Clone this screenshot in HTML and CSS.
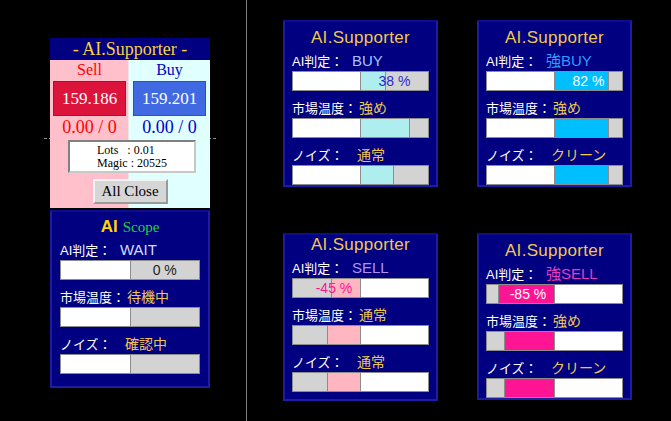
FILE: index.html
```html
<!DOCTYPE html>
<html lang="ja">
<head>
  <meta charset="UTF-8" />
  <meta name="viewport" content="width=device-width, initial-scale=1" />
  <title>AI.Supporter</title>
  <link rel="stylesheet" href="styles.css">
</head>
<body>
  <div class="screen">

    <div class="chart-left">
      <div class="crosshair"></div>

      <section class="trade-panel" aria-label="発注パネル">
        <h1 class="trade-title">- AI.Supporter -</h1>
        <div class="trade-body">
          <div class="sides">
            <div class="side sell">
              <span class="side-name">Sell</span>
              <span class="price">159.186</span>
              <span class="pl">0.00 / 0</span>
            </div>
            <div class="side buy">
              <span class="side-name">Buy</span>
              <span class="price">159.201</span>
              <span class="pl">0.00 / 0</span>
            </div>
          </div>
          <div class="lots">Lots&nbsp;&nbsp;&nbsp;: 0.01<br>Magic : 20525</div>
          <button class="close-all" type="button">All Close</button>
        </div>
      </section>

      <section class="card scope" aria-label="AI Scope">
        <h2 class="card-title"><b class="scope-ai">AI</b> <span class="scope-name">Scope</span></h2>
        <p class="label first"><span class="key k-judge">AI判定：</span><span class="val wait">WAIT</span></p>
        <div class="bar">
          <div class="half"></div>
          <div class="half track"><span class="pct dark">0 %</span></div>
        </div>
        <p class="label"><span class="key k-temp">市場温度：</span><span class="val">待機中</span></p>
        <div class="bar">
          <div class="half"></div>
          <div class="half track"></div>
        </div>
        <p class="label"><span class="key k-noise">ノイズ：</span><span class="val">確認中</span></p>
        <div class="bar">
          <div class="half"></div>
          <div class="half track"></div>
        </div>
      </section>
    </div>

    <div class="chart-right">

      <section class="card">
        <h2 class="card-title">AI.Supporter</h2>
        <p class="label first"><span class="key k-judge">AI判定：</span><span class="val buy">BUY</span></p>
        <div class="bar">
          <div class="half"></div>
          <div class="half track up"><span class="fill cyan" style="width:37%"></span><span class="pct blue">38 %</span></div>
        </div>
        <p class="label"><span class="key k-temp">市場温度：</span><span class="val">強め</span></p>
        <div class="bar">
          <div class="half"></div>
          <div class="half track up"><span class="fill cyan" style="width:73%"></span></div>
        </div>
        <p class="label"><span class="key k-noise">ノイズ：</span><span class="val">通常</span></p>
        <div class="bar">
          <div class="half"></div>
          <div class="half track up"><span class="fill cyan" style="width:49%"></span></div>
        </div>
      </section>

      <section class="card">
        <h2 class="card-title">AI.Supporter</h2>
        <p class="label first"><span class="key k-judge">AI判定：</span><span class="val strong-buy">強BUY</span></p>
        <div class="bar">
          <div class="half"></div>
          <div class="half track up"><span class="fill sky" style="width:80%"></span><span class="pct light">82 %</span></div>
        </div>
        <p class="label"><span class="key k-temp">市場温度：</span><span class="val">強め</span></p>
        <div class="bar">
          <div class="half"></div>
          <div class="half track up"><span class="fill sky" style="width:80%"></span></div>
        </div>
        <p class="label"><span class="key k-noise">ノイズ：</span><span class="val">クリーン</span></p>
        <div class="bar">
          <div class="half"></div>
          <div class="half track up"><span class="fill sky" style="width:80%"></span></div>
        </div>
      </section>

      <section class="card tight">
        <h2 class="card-title">AI.Supporter</h2>
        <p class="label first"><span class="key k-judge">AI判定：</span><span class="val sell">SELL</span></p>
        <div class="bar">
          <div class="half track down"><span class="fill pink" style="width:44%"></span><span class="pct rose">-45 %</span></div>
          <div class="half"></div>
        </div>
        <p class="label"><span class="key k-temp">市場温度：</span><span class="val">通常</span></p>
        <div class="bar">
          <div class="half track down"><span class="fill pink" style="width:50%"></span></div>
          <div class="half"></div>
        </div>
        <p class="label"><span class="key k-noise">ノイズ：</span><span class="val">通常</span></p>
        <div class="bar">
          <div class="half track down"><span class="fill pink" style="width:50%"></span></div>
          <div class="half"></div>
        </div>
      </section>

      <section class="card">
        <h2 class="card-title">AI.Supporter</h2>
        <p class="label first"><span class="key k-judge">AI判定：</span><span class="val strong-sell">強SELL</span></p>
        <div class="bar">
          <div class="half track down"><span class="fill hot" style="width:83%"></span><span class="pct light">-85 %</span></div>
          <div class="half"></div>
        </div>
        <p class="label"><span class="key k-temp">市場温度：</span><span class="val">強め</span></p>
        <div class="bar">
          <div class="half track down"><span class="fill hot" style="width:74%"></span></div>
          <div class="half"></div>
        </div>
        <p class="label"><span class="key k-noise">ノイズ：</span><span class="val">クリーン</span></p>
        <div class="bar">
          <div class="half track down"><span class="fill hot" style="width:74%"></span></div>
          <div class="half"></div>
        </div>
      </section>

    </div>
  </div>
</body>
</html>
```

FILE: styles.css
```css
:root {
  --navy: #000080;
  --edge: #1c1ca4;
  --gold: #f0c850;
  --track: #d3d3d3;
  --bar-line: #8c8c8c;
  --font-sans: "Liberation Sans", "Noto Sans CJK JP", sans-serif;
  --font-serif: "Liberation Serif", "Noto Sans CJK JP", serif;
}

*, *::before, *::after {
  box-sizing: border-box;
}
body {
  margin: 0;
  background: #000;
  font-family: var(--font-sans);
  color: #fff;
  overflow: hidden;
}
h1, h2, p {
  margin: 0;
  font-weight: normal;
}

.screen {
  display: flex;
  min-height: 100vh;
}

/* left chart window, split from the right one by a grey line */
.chart-left {
  position: relative;
  width: 247px;
  border-right: 1px solid #808080;
  padding: 38px 0 0 50px;
}
.crosshair {
  position: absolute;
  top: 138px;
  left: 44px;
  width: 172px;
  border-top: 1px dashed #8a8a8a;
}

.trade-panel {
  position: relative;
  width: 160px;
}
.trade-title {
  height: 22px;
  line-height: 22px;
  background: var(--navy);
  color: #f7d23e;
  font-family: var(--font-serif);
  font-size: 18px;
  text-align: center;
}
.trade-body {
  height: 148px;
  background: linear-gradient(to right, #ffc0cb 78px, #e8e8e8 78px, #e8e8e8 79px, #e0ffff 79px);
  font-family: var(--font-serif);
}
.sides {
  display: grid;
  grid-template-columns: 79px 81px;
}
.side {
  display: flex;
  flex-direction: column;
  align-items: center;
}
.side-name {
  height: 20px;
  line-height: 20px;
  font-size: 16px;
}
.price {
  width: 73px;
  height: 35px;
  margin-top: 1px;
  line-height: 33px;
  text-align: center;
  font-size: 17px;
  color: #fff;
}
.pl {
  margin-top: 2px;
  height: 18px;
  line-height: 18px;
  font-size: 18px;
}
.sell .side-name,
.sell .pl {
  color: #ff0000;
}
.sell .price {
  background: #dc143c;
  border: 1px solid #b0102e;
}
.buy .side-name,
.buy .pl {
  color: #0000cd;
}
.buy .price {
  background: #4169e1;
  border: 1px solid #2f50b8;
}

.lots {
  width: 128px;
  height: 33px;
  margin: 4px 0 0 18px;
  padding: 2px 0 0 27px;
  background: #fff;
  border: 2px solid;
  border-color: #808080 #c8c8c8 #c8c8c8 #808080;
  color: #000;
  font-size: 12px;
  line-height: 13px;
}
.close-all {
  display: block;
  width: 75px;
  height: 25px;
  margin: 6px auto 0;
  padding: 0;
  background: #d6d6d6;
  border: 2px solid;
  border-color: #f4f4f4 #9a9a9a #9a9a9a #f4f4f4;
  font-family: var(--font-serif);
  font-size: 15px;
  color: #000;
}

/* indicator cards */
.chart-right {
  display: grid;
  grid-template-columns: 155px 155px;
  grid-auto-rows: 167px;
  column-gap: 39px;
  row-gap: 46px;
  padding: 20px 0 0 36px;
}
.card {
  background: var(--navy);
  border: 2px solid var(--edge);
  border-top-color: #0c0c90;
  padding: 6px 7px 0;
}
.card.tight {
  padding-top: 0;
  height: 168px;
}
.card.scope {
  width: 160px;
  margin-top: 2px;
  padding: 5px 8px 12px;
}
.card-title {
  height: 20px;
  line-height: 20px;
  text-align: center;
  font-size: 17px;
  letter-spacing: 0.3px;
  color: var(--gold);
}
.scope-ai {
  font-size: 17px;
  letter-spacing: 0;
  color: #ffd700;
}
.scope-name {
  font-family: var(--font-serif);
  font-size: 15px;
  letter-spacing: 0;
  color: #22d23c;
}

.label {
  height: 18px;
  line-height: 18px;
  margin-top: 8px;
  white-space: nowrap;
}
.label.first {
  margin-top: 4px;
}
.key {
  display: inline-block;
  font-size: 13px;
}
.k-judge { width: 60px; }
.k-temp { width: 67px; }
.k-noise { width: 65px; }
.val {
  font-size: 14px;
  color: var(--gold);
}
.val.wait { color: #d6dcff; font-size: 15px; }
.val.buy { color: #a4c4ff; font-size: 15px; }
.val.strong-buy { color: #2e9cff; font-size: 15px; }
.val.sell { color: #b092f4; font-size: 15px; }
.val.strong-sell { color: #e43cc2; font-size: 15px; }

/* two-sided gauge: left half for sell, right half for buy */
.bar {
  display: flex;
  height: 20px;
  margin-top: 1px;
  border: 1px solid var(--bar-line);
  background: #fff;
}
.half {
  flex: 1;
  display: grid;
}
.half + .half {
  border-left: 1px solid var(--bar-line);
}
.half.track {
  background: var(--track);
}
.fill {
  grid-area: 1 / 1;
  height: 100%;
}
.up .fill {
  justify-self: start;
  border-right: 1px solid var(--bar-line);
}
.down .fill {
  justify-self: end;
  border-left: 1px solid var(--bar-line);
}
.fill.cyan { background: #afeeee; }
.fill.sky { background: #00bfff; }
.fill.pink { background: #ffb6c1; }
.fill.hot { background: #ff1493; }

.pct {
  grid-area: 1 / 1;
  line-height: 18px;
  font-size: 14px;
  text-align: center;
}
.down .pct {
  padding-left: 15px;
}
.pct.dark { color: #222; }
.pct.blue { color: #2a2ad2; }
.pct.light { color: #fff; }
.pct.rose { color: #ff1493; }
```
